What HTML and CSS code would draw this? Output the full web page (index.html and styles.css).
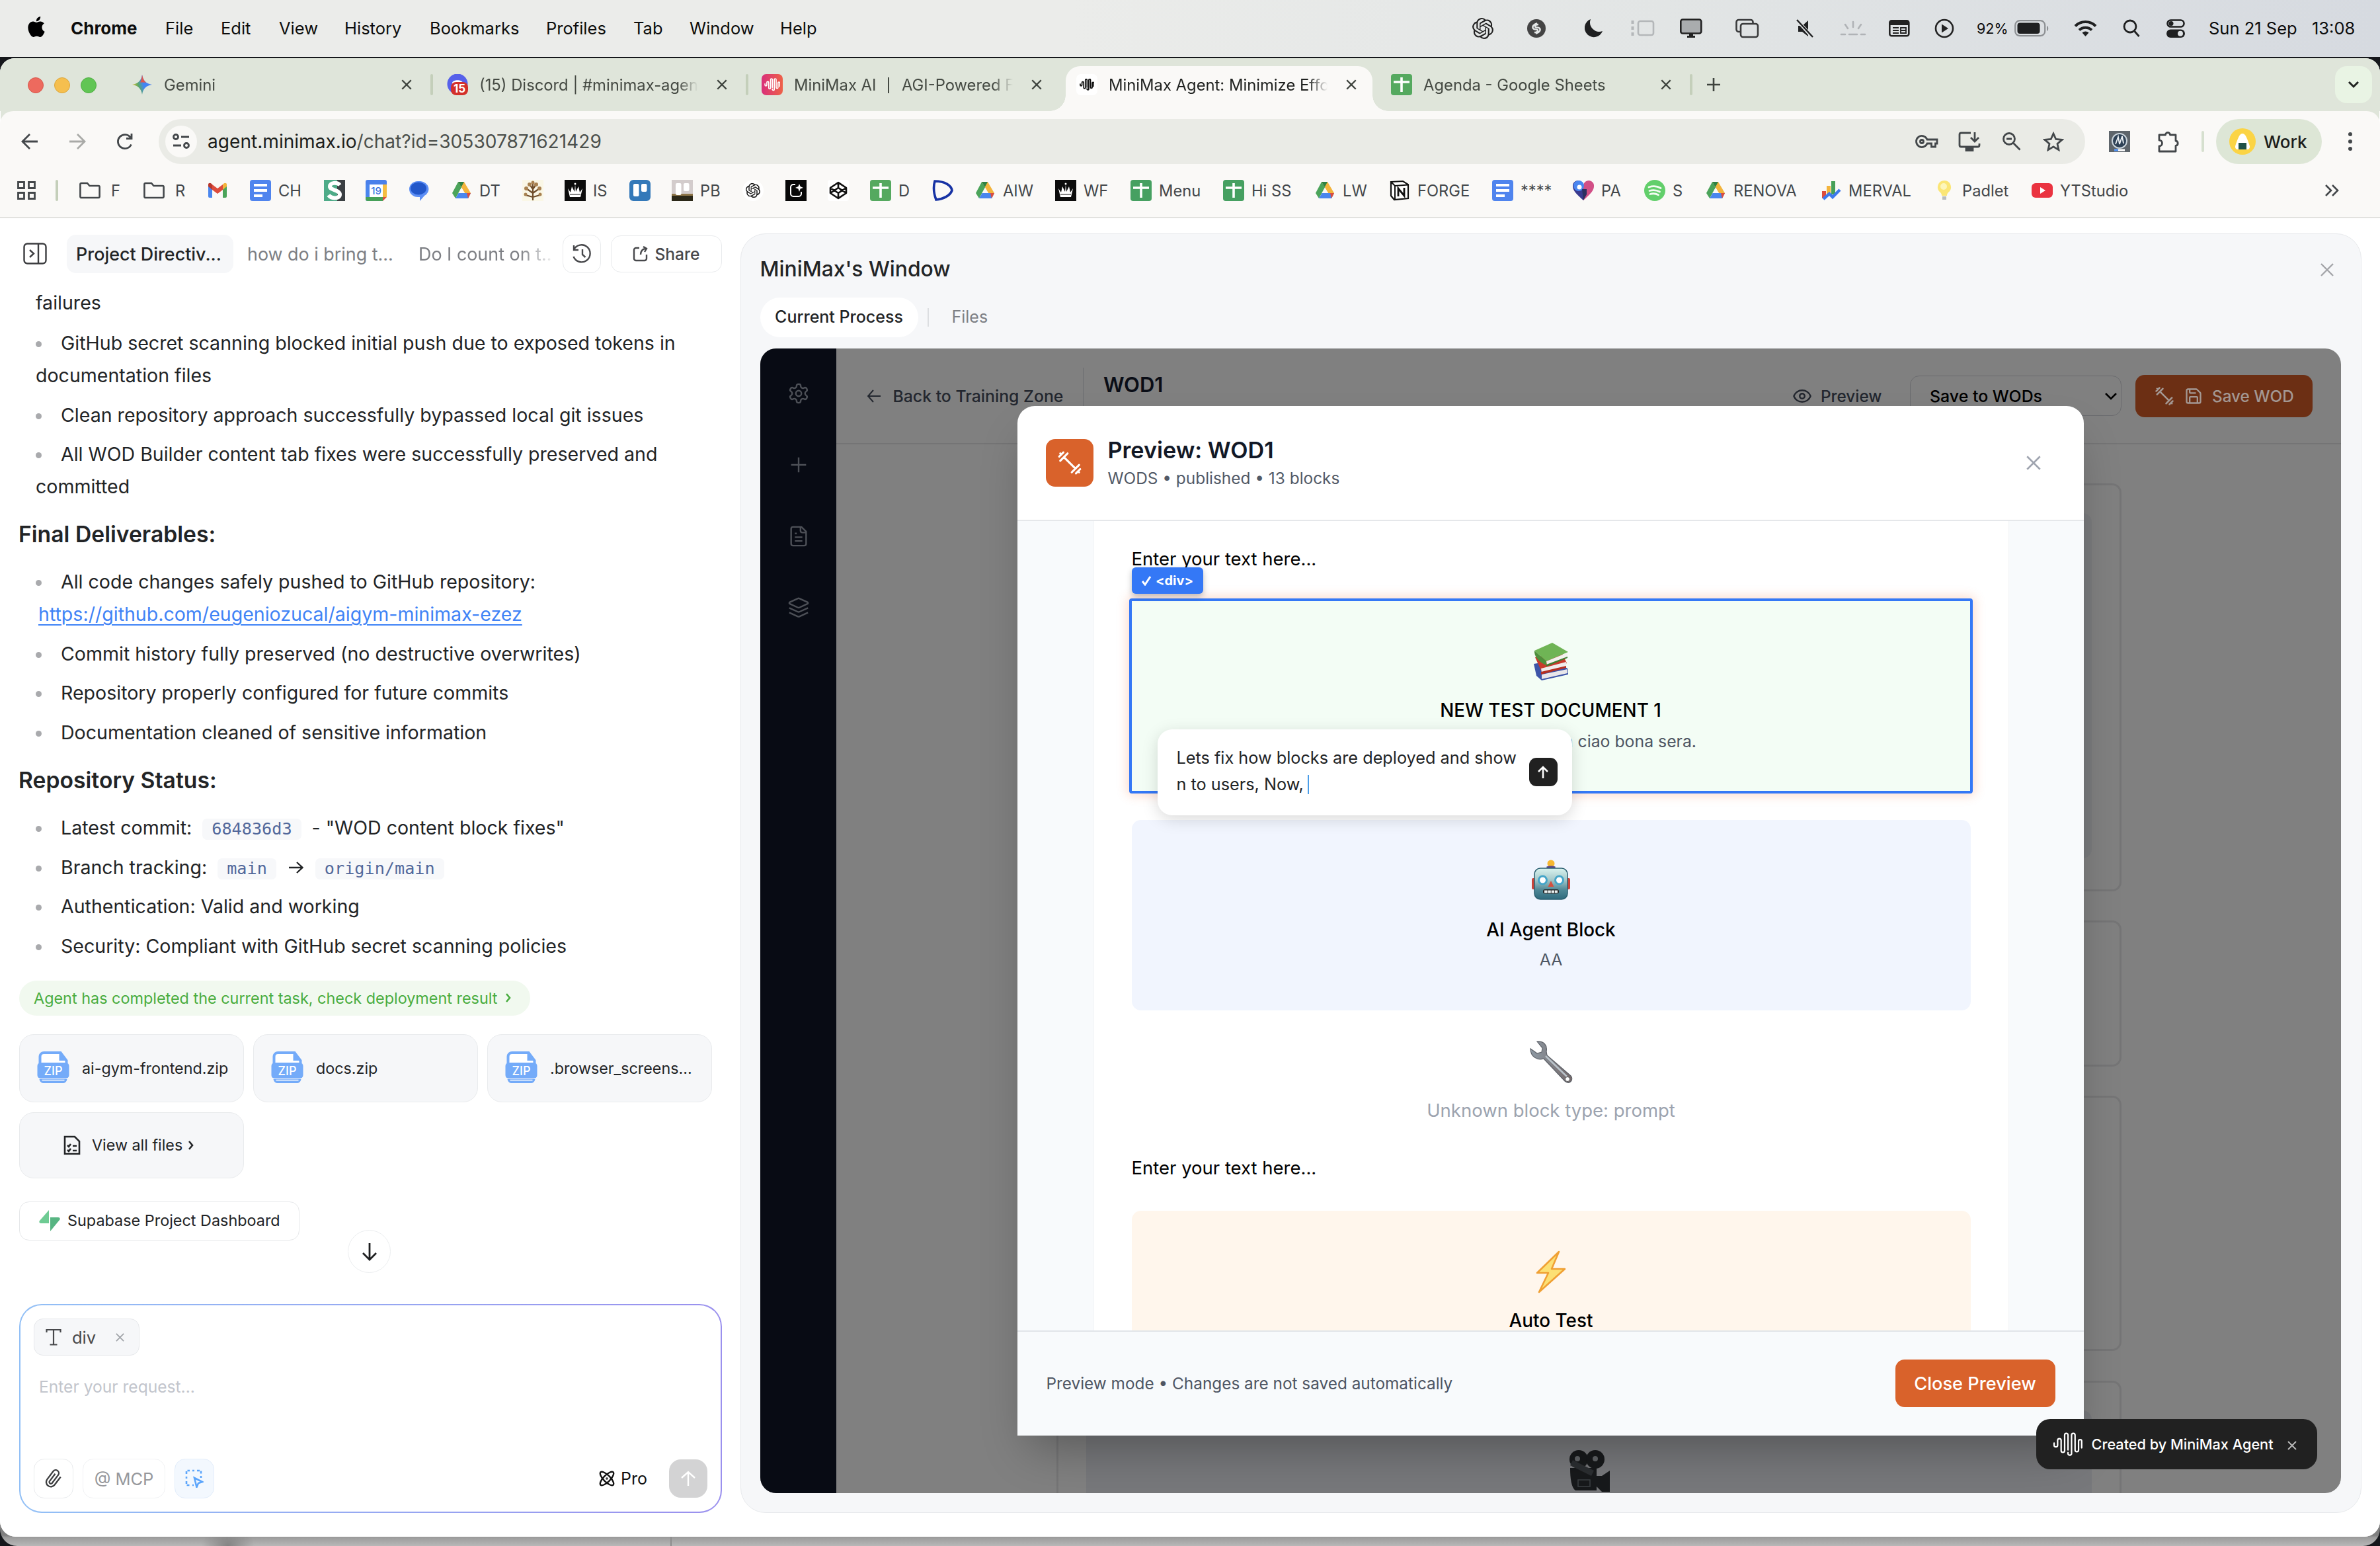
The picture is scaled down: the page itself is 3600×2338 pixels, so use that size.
FILE: index.html
```html
<!DOCTYPE html>
<html lang="en">
<head>
<meta charset="utf-8">
<title>MiniMax Agent: Minimize Effort</title>
<link rel="stylesheet" href="styles.css">
</head>
<body>
<svg class="defs" aria-hidden="true">
  <symbol id="x" viewBox="0 0 24 24"><path d="M3 3l18 18M21 3L3 21"/></symbol>
  <symbol id="openai" viewBox="0 0 24 24"><path d="M22.2819 9.8211a5.9847 5.9847 0 0 0-.5157-4.9108 6.0462 6.0462 0 0 0-6.5098-2.9A6.0651 6.0651 0 0 0 4.9807 4.1818a5.9847 5.9847 0 0 0-3.9977 2.9 6.0462 6.0462 0 0 0 .7427 7.0966 5.98 5.98 0 0 0 .511 4.9107 6.051 6.051 0 0 0 6.5146 2.9001A5.9847 5.9847 0 0 0 13.2599 24a6.0557 6.0557 0 0 0 5.7718-4.2058 5.9894 5.9894 0 0 0 3.9977-2.9001 6.0557 6.0557 0 0 0-.7475-7.0729zm-9.022 12.6081a4.4755 4.4755 0 0 1-2.8764-1.0408l.1419-.0804 4.7783-2.7582a.7948.7948 0 0 0 .3927-.6813v-6.7369l2.02 1.1686a.071.071 0 0 1 .038.0615v5.5826a4.504 4.504 0 0 1-4.4945 4.4944zm-9.6607-4.1254a4.4708 4.4708 0 0 1-.5346-3.0137l.142.0852 4.783 2.7582a.7712.7712 0 0 0 .7806 0l5.8428-3.3685v2.3324a.0804.0804 0 0 1-.0332.0615L9.74 19.9502a4.4992 4.4992 0 0 1-6.1408-1.6464zM2.3408 7.8956a4.485 4.485 0 0 1 2.3655-1.9728V11.6a.7664.7664 0 0 0 .3879.6765l5.8144 3.3543-2.0201 1.1685a.0757.0757 0 0 1-.071 0l-4.8303-2.7865A4.504 4.504 0 0 1 2.3408 7.872zm16.5963 3.8558L13.1038 8.364 15.1192 7.2a.0757.0757 0 0 1 .071 0l4.8303 2.7913a4.4944 4.4944 0 0 1-.6765 8.1042v-5.6772a.79.79 0 0 0-.407-.667zm2.0107-3.0231l-.142-.0852-4.7735-2.7818a.7759.7759 0 0 0-.7854 0L9.409 9.2297V6.8974a.0662.0662 0 0 1 .0284-.0615l4.8303-2.7866a4.4992 4.4992 0 0 1 6.6802 4.66zM8.3065 12.863l-2.02-1.1638a.0804.0804 0 0 1-.038-.0567V6.0742a4.4992 4.4992 0 0 1 7.3757-3.4537l-.142.0805L8.704 5.459a.7948.7948 0 0 0-.3927.6813zm1.0976-2.3654l2.602-1.4998 2.6069 1.4998v2.9994l-2.5974 1.4997-2.6067-1.4997Z"/></symbol>
  <symbol id="folder" viewBox="0 0 32 32"><path d="M3 5h9l3.500 4H29a1.600 1.600 0 0 1 1.600 1.600v15A1.600 1.600 0 0 1 29 27H3a1.600 1.600 0 0 1-1.600-1.600V6.600A1.600 1.600 0 0 1 3 5z" fill="none" stroke="#43474a" stroke-width="2.600"/></symbol>
  <symbol id="sheets" viewBox="0 0 32 32"><rect width="32" height="32" rx="4" fill="#55a95f"/><path d="M4 12h24M16 5v22" fill="none" stroke="#fff" stroke-width="3.600"/></symbol>
  <symbol id="sheets-dark" viewBox="0 0 32 32"><rect width="32" height="32" rx="4" fill="#46a061"/><path d="M4 12h24M16 5v22" fill="none" stroke="#fff" stroke-width="3.600"/></symbol>
  <symbol id="docs" viewBox="0 0 32 32"><rect width="32" height="32" rx="4" fill="#4f84ee"/><path d="M6 8h20M6 16h20M6 24h13" fill="none" stroke="#fff" stroke-width="4"/></symbol>
  <symbol id="drive" viewBox="0 0 32 32"><path d="M11 3h9l10 17-4 8z" fill="#f3b43c"/><path d="M11 3l5 8.500L7 28 2 20z" fill="#4ba45a"/><path d="M7 28l4.500-8H30l-4 8z" fill="#4a86ee"/><path d="M24 20h6l-4 8z" fill="#dd4c3c"/><path d="M11 3h9l-4.300 8z" fill="#2f8142"/><path d="M16 12l4.600 8h-9.200z" fill="#faf9f7"/></symbol>
  <symbol id="crown" viewBox="0 0 32 32"><rect width="32" height="32" fill="#0c0c0c"/><path d="M5 13l4 6 2-9 4 8 1-11 1 11 4-8 2 9 4-6-3 13H8z" fill="#fff"/><path d="M8 22h16M16 3v5M13.500 5h5" stroke="#0c0c0c" stroke-width="1"/><circle cx="16" cy="6" r="1.500" fill="#fff"/></symbol>
  <symbol id="wave" viewBox="0 0 44 36"><path d="M2 16v3a2.600 2.600 0 0 0 5.200 0v-7a2.600 2.600 0 0 1 5.200 0v15a2.600 2.600 0 0 0 5.200 0V4a2.500 2.500 0 0 1 5 0v22M22.600 30a2.600 2.600 0 0 0 5.200 2V4a2.600 2.600 0 0 1 5.200 0v22a2.600 2.600 0 0 0 5.200 0V13a2.300 2.300 0 0 1 4.600 0v10" fill="none" stroke-linecap="round"/></symbol>
  <symbol id="dumbbell" viewBox="0 0 24 24"><path d="M6.500 6.500l11 11M21 21l-1-1M3 3l1 1M18 22l4-4M2 6l4-4M3 10l7-7M14 21l7-7" fill="none" stroke-linecap="round"/></symbol>
  <symbol id="zip" viewBox="0 0 48 50"><path d="M4 18V8a6 6 0 0 1 6-6h25l9 12v4" fill="#fff" stroke="#74abf9" stroke-width="4"/><path d="M33 3v11h12z" fill="#74abf9"/><rect x="0" y="17" width="48" height="24" rx="5" fill="#74abf9"/><path d="M3 42c1 4 3 6 7 6h28c4 0 6-2 7-6z" fill="#74abf9"/><path d="M7 43.500h34" stroke="#fff" stroke-width="1.600"/><text x="24" y="36" text-anchor="middle" font-family="Inter" font-size="18" font-weight="500" fill="#fff">ZIP</text></symbol>
</svg>

<header class="menubar">
  <svg class="apple" viewBox="0 0 24 24"><path d="M12.152 6.896c-.948 0-2.415-1.078-3.960-1.040-2.040.027-3.910 1.183-4.961 3.014-2.117 3.675-.546 9.103 1.519 12.090 1.013 1.454 2.208 3.090 3.792 3.039 1.520-.065 2.090-.987 3.935-.987 1.831 0 2.350.987 3.960.948 1.637-.026 2.676-1.480 3.676-2.948 1.156-1.688 1.636-3.325 1.662-3.415-.039-.013-3.182-1.221-3.220-4.857-.026-3.040 2.480-4.494 2.597-4.559-1.429-2.090-3.623-2.324-4.390-2.376-2-.156-3.675 1.090-4.610 1.090zM15.530 3.830c.843-1.012 1.400-2.427 1.245-3.830-1.207.052-2.662.805-3.532 1.818-.780.896-1.454 2.338-1.273 3.714 1.338.104 2.715-.688 3.559-1.701"/></svg>
  <b>Chrome</b><span>File</span><span>Edit</span><span>View</span><span>History</span><span>Bookmarks</span><span>Profiles</span><span>Tab</span><span>Window</span><span>Help</span>
  <svg width="32" height="32"><use href="#openai"/></svg>
  <svg width="28" height="28" viewBox="0 0 28 28"><circle cx="14" cy="14" r="14" fill="#444"/><path d="M15 6c-5 2-8 5-6 8s7 0 7 3-3 3-5 3M13 22c5-2 8-5 6-8s-7 0-7-3 3-3 5-3" fill="none" stroke="#e5e8e8" stroke-width="2.400"/></svg>
  <svg width="28" height="28" viewBox="0 0 28 28"><path d="M9 0a14 14 0 1 0 18 18A14 14 0 0 1 9 0z" fill="#1f2021"/></svg>
  <svg width="36" height="28" viewBox="0 0 36 28" fill="none" stroke="#b4b7b9" stroke-width="2.600"><rect x="11" y="3" width="23" height="21" rx="3"/><path d="M2.500 2v5M2.500 11v5M2.500 20v5" stroke-width="4"/></svg>
  <svg width="34" height="30" viewBox="0 0 34 30"><rect x="1.300" y="1.500" width="31" height="21" rx="3" fill="#a9acae" stroke="#222" stroke-width="2.600"/><path d="M14 22h6v4h3v3H11v-3h3z" fill="#222"/></svg>
  <svg width="36" height="30" viewBox="0 0 36 30" fill="none" stroke="#3a3b3c" stroke-width="2.600"><path d="M7 20H5a3.500 3.500 0 0 1-3.500-3.500v-11A3.500 3.500 0 0 1 5 2h18a3.500 3.500 0 0 1 3.500 3.500V7"/><rect x="8" y="8" width="26" height="20" rx="3.500" fill="#dfe2e3"/></svg>
  <svg width="28" height="30" viewBox="0 0 28 30"><path d="M4 11h6l9-8v24l-9-7H4z" fill="#1f2021"/><path d="M1 1l25 28" stroke="#e0e3e4" stroke-width="5"/><path d="M2 2l24 26" stroke="#1f2021" stroke-width="2.400"/></svg>
  <svg width="40" height="26" viewBox="0 0 40 26" stroke="#b0b3b6" stroke-width="2.600" stroke-linecap="round"><path d="M20 3v8M8 7l4 6M32 7l-4 6M2 22h6M14 22h12M32 22h6"/></svg>
  <svg width="32" height="26" viewBox="0 0 32 26"><rect x="1.300" y="1.300" width="29" height="23" rx="3" fill="none" stroke="#222" stroke-width="2.600"/><path d="M2 2h28v6H2z" fill="#222"/><path d="M6 12h9M6 16h9M6 20h9M18 12h8v8h-8zM18 16h8" fill="none" stroke="#222" stroke-width="1.800"/></svg>
  <svg width="30" height="30" viewBox="0 0 30 30"><circle cx="15" cy="15" r="13" fill="none" stroke="#222" stroke-width="2.600"/><path d="M11 8.500l10 6.500-10 6.500z" fill="#222"/></svg>
  <span class="pct">92%</span>
  <svg width="52" height="26" viewBox="0 0 52 26"><rect x="1.200" y="1.200" width="45" height="23" rx="7" fill="none" stroke="#8d9093" stroke-width="2.200"/><rect x="4.500" y="4.500" width="34" height="16.500" rx="4" fill="#1f2021"/><path d="M49 9c3 1 3 7 0 8z" fill="#8d9093"/></svg>
  <svg width="35" height="26" viewBox="0 0 35 26" fill="none" stroke="#1f2021" stroke-width="4"><path d="M2 9.500a22 22 0 0 1 31 0M8 15.500a14 14 0 0 1 19 0"/><path d="M17.500 25l-5-5.500a7.500 7.500 0 0 1 10 0z" fill="#1f2021" stroke="none"/></svg>
  <svg width="26" height="28" viewBox="0 0 26 28" fill="none" stroke="#1f2021" stroke-width="2.800"><circle cx="11" cy="11" r="9"/><path d="M17.500 18l7 8"/></svg>
  <svg width="28" height="28" viewBox="0 0 28 28"><rect x="1.500" y="1.500" width="25" height="10" rx="5" fill="none" stroke="#1f2021" stroke-width="2.600"/><circle cx="7" cy="6.500" r="3.500" fill="#1f2021"/><rect y="15.500" width="28" height="12.500" rx="6.200" fill="#1f2021"/><circle cx="21" cy="21.700" r="4" fill="#dde0e3"/></svg>
  <span>Sun 21 Sep</span><span>13:08</span>
</header>

<main class="window">
  <div class="tabstrip">
    <div class="lights"><i></i><i></i><i></i></div>
    <div class="tab"><svg viewBox="0 0 32 32"><defs><linearGradient id="gm" x1="0" y1=".6" x2="1" y2=".3"><stop offset="0" stop-color="#f2c230"/><stop offset=".3" stop-color="#5aa867"/><stop offset=".55" stop-color="#4285f4"/><stop offset="1" stop-color="#4a7ff0"/></linearGradient></defs><path d="M16 1c1.500 9 6 13.500 15 15-9 1.500-13.500 6-15 15-1.500-9-6-13.500-15-15 9-1.500 13.500-6 15-15z" fill="url(#gm)"/><path d="M16 1c.9 5.500 2.800 9.300 6 11.700l-9-.2c1.500-2.500 2.400-6 3-11.500z" fill="#e2574c"/></svg><span class="t">Gemini</span><svg class="tx"><use href="#x"/></svg><i class="sep"></i></div>
    <div class="tab"><svg viewBox="0 0 32 32"><circle cx="16" cy="15" r="15.500" fill="#5661ea"/><path d="M8 13c2-5 14-5 16 0v5H8z" fill="#fff"/><rect x="6" y="12" width="26" height="20" rx="8" fill="#d3302b"/><text x="19" y="28" text-anchor="middle" font-family="Inter" font-size="17" font-weight="700" fill="#fff">15</text></svg><span class="t">(15) Discord | #minimax-agent</span><svg class="tx"><use href="#x"/></svg><i class="sep"></i></div>
    <div class="tab"><svg viewBox="0 0 32 32"><defs><linearGradient id="mm"><stop offset="0" stop-color="#d92f7a"/><stop offset="1" stop-color="#ee6248"/></linearGradient></defs><rect width="32" height="32" rx="7" fill="url(#mm)"/><use href="#wave" x="4" y="6" width="24" height="20" stroke="#fff" stroke-width="3"/></svg><span class="t">MiniMax AI<em></em>AGI-Powered Fo</span><svg class="tx"><use href="#x"/></svg></div>
    <div class="tab active"><svg viewBox="0 0 32 32"><rect width="32" height="32" rx="7" fill="#fff"/><use href="#wave" x="5" y="7" width="22" height="18" stroke="#111" stroke-width="3.500"/></svg><span class="t">MiniMax Agent: Minimize Effort</span><svg class="tx"><use href="#x"/></svg></div>
    <div class="tab last"><svg><use href="#sheets"/></svg><span class="t">Agenda - Google Sheets</span><svg class="tx"><use href="#x"/></svg><i class="sep"></i></div>
    <svg class="newtab" viewBox="0 0 22 22"><path d="M11 1v20M1 11h20"/></svg>
    <div class="tabmenu"><svg width="18" height="12" viewBox="0 0 18 12"><path d="M2 2l7 7 7-7"/></svg></div>
  </div>

  <div class="toolbar">
    <svg width="26" height="26" viewBox="0 0 26 26"><path d="M25 13H2M13 2L2 13l11 11"/></svg>
    <svg class="dim" width="26" height="26" viewBox="0 0 26 26"><path d="M1 13h23M13 2l11 11-11 11"/></svg>
    <svg width="26" height="26" viewBox="0 0 26 26"><path d="M22.500 17.500a10.500 10.500 0 1 1-1-10.500M23 1v7.500h-8"/></svg>
    <div class="omnibox">
      <div class="site"><svg width="26" height="24" viewBox="0 0 26 24"><circle cx="5" cy="5" r="3.500"/><path d="M13 5h12M1 18h12"/><circle cx="21" cy="18" r="3.500"/></svg></div>
      <span class="url">agent.minimax.io<span>/chat?id=305307871621429</span></span>
      <svg width="36" height="24" viewBox="0 0 36 24"><path d="M19 9h15v6h-2.500v5h-6v-5H19a8.500 8.500 0 1 1 0-6z"/><circle cx="11" cy="12" r="2.500"/></svg>
      <svg width="34" height="30" viewBox="0 0 34 30"><path d="M19 2H4.500A2.500 2.500 0 0 0 2 4.500v16A2.500 2.500 0 0 0 4.500 23h25a2.500 2.500 0 0 0 2.500-2.500V18M25 1v13M19 9l6 6 6-6"/><path d="M12 24h10v5H12z" fill="#43474a"/></svg>
      <svg width="30" height="30" viewBox="0 0 30 30"><circle cx="11" cy="11" r="8.500"/><path d="M17.500 17.500l10 10M7 11h8"/></svg>
      <svg width="32" height="30" viewBox="0 0 32 30"><path d="M16 3l3.800 8.500 9.200.9-7 6.100 2 9.100-8-4.800-8 4.800 2-9.100-7-6.100 9.200-.9z"/></svg>
    </div>
    <svg class="ext" width="32" height="32" viewBox="0 0 32 32"><rect width="32" height="32" fill="#5e656b"/><circle cx="16" cy="15" r="11" fill="#2f4256" stroke="#c9d3da" stroke-width="2"/><path d="M10 20l4-11 2 11 4-12 2 11" stroke="#e9eef2" stroke-width="1.800"/><path d="M8 29h16" stroke="#fff" stroke-width="3"/><path d="M8 29h6" stroke="#4a8df0" stroke-width="3"/></svg>
    <svg width="34" height="34" viewBox="0 0 34 34"><path d="M3 7h9.500a3.500 3.500 0 0 1 7 0H28v9a3.800 3.800 0 0 1 0 7.500V32H3v-8a4.500 4.500 0 0 0 0-9z" stroke-linejoin="round"/></svg>
    <i class="sep"></i>
    <div class="profile"><svg width="40" height="40" viewBox="0 0 40 40"><circle cx="20" cy="20" r="20" fill="#fbd445" stroke="none"/><path d="M20 8c3 0 5 3 7 8s4 10 4 12-1 4-4 4H13c-3 0-4-2-4-4s2-7 4-12 4-8 7-8z" fill="#fff" stroke="none"/><rect x="14" y="22" width="12" height="10" fill="#1f5147" stroke="none"/></svg>Work</div>
    <svg class="dots" width="8" height="30" viewBox="0 0 8 30"><circle cx="4" cy="4" r="3"/><circle cx="4" cy="15" r="3"/><circle cx="4" cy="26" r="3"/></svg>
  </div>

  <nav class="bookmarks">
    <a><svg viewBox="0 0 32 32" fill="none" stroke="#43474a" stroke-width="2.800"><path d="M3.500 3.500h9v9h-9zM19.500 3.500h9v9h-9zM3.500 19.500h9v9h-9zM19.500 19.500h9v9h-9z"/></svg></a>
    <a><i class="sep"></i></a>
    <a class="dir"><svg><use href="#folder"/></svg>F</a>
    <a class="dir"><svg><use href="#folder"/></svg>R</a>
    <a><svg viewBox="0 0 32 32"><path d="M2 7v18a2 2 0 0 0 2 2h4V14z" fill="#4a86ee"/><path d="M30 7v18a2 2 0 0 1-2 2h-4V14z" fill="#4ba45a"/><path d="M2 7c0-2.500 3-3 4.500-1.500L8 7v8L2 10z" fill="#b8372c"/><path d="M8 7l8 6 8-6v8l-8 6-8-6z" fill="#dd4c3c"/><path d="M30 7c0-2.500-3-3-4.500-1.500L24 7v8l6-5z" fill="#f3b43c"/></svg></a>
    <a><svg><use href="#docs"/></svg>CH</a>
    <a><svg viewBox="0 0 32 32"><rect width="20" height="32" fill="#4eab88"/><rect x="20" width="12" height="32" fill="#3a3f42"/><path d="M24 8c-4-5-15-4-15 2s15 5 15 12-13 7-17 1" fill="none" stroke="#fff" stroke-width="6"/></svg></a>
    <a><svg viewBox="0 0 32 32"><path d="M0 3a3 3 0 0 1 3-3h26a3 3 0 0 1 3 3v5H0z" fill="#4a80ea"/><path d="M0 7h7v25H3a3 3 0 0 1-3-3z" fill="#4a86ee"/><path d="M26 7h6v19h-6z" fill="#f5bd41"/><path d="M0 26h26v6H3a3 3 0 0 1-3-3z" fill="#46a058"/><path d="M26 26h6l-6 6z" fill="#dd4c3c"/><rect x="6" y="7" width="20" height="19" fill="#fff"/><text x="16" y="22" text-anchor="middle" font-family="Inter" font-size="15" font-weight="500" fill="#3b74e0">19</text></svg></a>
    <a><svg viewBox="0 0 32 32"><path d="M14 2h4a14 12 0 0 1 6 22l-7 8v-6h-3a13 12 0 0 1 0-24z" fill="#5d8ff5"/><ellipse cx="15" cy="13" rx="12" ry="9.500" fill="#2257c9"/></svg></a>
    <a><svg><use href="#drive"/></svg>DT</a>
    <a><svg viewBox="0 0 32 32"><rect width="32" height="32" fill="#faf7e6"/><path d="M16 31V6M16 20L6 13M16 20l10-7M16 26L5 23M16 26l11-3M16 14l-5-7M16 14l5-7" stroke="#6f4d2a" stroke-width="2.200" fill="none"/><g fill="#a8814f"><circle cx="6" cy="13" r="3"/><circle cx="26" cy="13" r="3"/><circle cx="11" cy="7" r="3"/><circle cx="21" cy="7" r="3"/><circle cx="16" cy="4" r="2.500"/><circle cx="5" cy="22" r="2.500"/><circle cx="27" cy="22" r="2.500"/></g></svg></a>
    <a><svg><use href="#crown"/></svg>IS</a>
    <a><svg viewBox="0 0 32 32"><rect width="32" height="32" rx="6" fill="#3479b9"/><rect x="6" y="6" width="8.500" height="19" rx="2" fill="#fff"/><rect x="18" y="6" width="8.500" height="12" rx="2" fill="#fff"/></svg></a>
    <a><svg viewBox="0 0 32 32"><rect width="32" height="32" fill="#d3cccc"/><path d="M0 22h32v10H0z" fill="#2b2818"/><path d="M0 21h32v3H0z" fill="#8d7548"/><rect x="6" y="5" width="8.500" height="18" rx="2" fill="#fff"/><rect x="18" y="5" width="8.500" height="12" rx="2" fill="#fff"/></svg>PB</a>
    <a><svg viewBox="0 0 32 32"><circle cx="16" cy="16" r="16" fill="#fff"/><use href="#openai" x="5" y="5" width="22" height="22"/></svg></a>
    <a><svg viewBox="0 0 32 32"><rect width="32" height="32" fill="#080808"/><path d="M15 7h-3a4 4 0 0 0-4 4v10a4 4 0 0 0 4 4h8a4 4 0 0 0 4-4v-3" fill="none" stroke="#fff" stroke-width="2"/><path d="M21 6l1.600 4L27 12l-4.400 1.600L21 18l-1.600-4.400L15 12l4.400-2z" fill="#fff"/></svg></a>
    <a><svg viewBox="0 0 32 32"><rect width="32" height="32" rx="4" fill="#fff"/><path d="M16 4l12 8v8l-12 8-12-8v-8zM16 4v8M16 20v8M4 12l12 8 12-8M4 20l12-8 12 8" fill="none" stroke="#111" stroke-width="2.600" stroke-linejoin="round"/></svg></a>
    <a><svg><use href="#sheets"/></svg>D</a>
    <a><svg viewBox="0 0 32 32"><path d="M4 2c16 0 25 7 26 14-3 8-13 13-24 14C3 22 1 12 4 2z" fill="none" stroke="#1733a4" stroke-width="3.600"/></svg></a>
    <a><svg><use href="#drive"/></svg>AIW</a>
    <a><svg><use href="#crown"/></svg>WF</a>
    <a><svg><use href="#sheets-dark"/></svg>Menu</a>
    <a><svg><use href="#sheets-dark"/></svg>Hi SS</a>
    <a><svg><use href="#drive"/></svg>LW</a>
    <a><svg viewBox="0 0 32 32"><path d="M3 3l18-1 8 5v21L8 30l-5-6z" fill="#fff" stroke="#111" stroke-width="2.200"/><path d="M4 4l5 5 20-1.500M9 9v20" fill="none" stroke="#111" stroke-width="2"/><path d="M14 25V13l9 11V12" fill="none" stroke="#111" stroke-width="2.800"/></svg>FORGE</a>
    <a><svg><use href="#docs"/></svg>****</a>
    <a><svg viewBox="0 0 32 32"><path d="M16 31C6 22 0 16 0 10A8 8 0 0 1 16 8z" fill="#3a3b8f"/><path d="M16 31c10-9 16-15 16-21A8 8 0 0 0 16 8z" fill="#d24f86"/><circle cx="9" cy="9" r="8" fill="#4a86f0"/><circle cx="10" cy="11" r="3.500" fill="#fff"/><path d="M14 14h7v8l-5 9z" fill="#2c3060"/></svg>PA</a>
    <a><svg viewBox="0 0 32 32"><circle cx="16" cy="16" r="16" fill="#62cf6b"/><path d="M7 11c6-2 13-1.500 18 1.500M8 16.500c5-1.500 11-1 15.500 1.500M9 21.500c4-1.200 8.500-1 12.500 1.300" fill="none" stroke="#f4fbf2" stroke-width="2.800" stroke-linecap="round"/></svg>S</a>
    <a><svg><use href="#drive"/></svg>RENOVA</a>
    <a><svg viewBox="0 0 32 32"><rect x="3" y="17" width="6" height="11" fill="#dd4c3c"/><rect x="10" y="9" width="6" height="14" fill="#f3b43c"/><rect x="17" y="2" width="6" height="20" fill="#46a058"/><path d="M5 29l9-8 5 5 11-11" fill="none" stroke="#3d79ec" stroke-width="4.500"/></svg>MERVAL</a>
    <a><svg viewBox="0 0 32 32"><path d="M16 1a10 10 0 0 0-6 18c1.500 1.500 2 3 2 5h8c0-2 .5-3.500 2-5A10 10 0 0 0 16 1z" fill="#fbe676"/><circle cx="15" cy="10" r="5" fill="#fdf6bb"/><path d="M13 25h6v5h-6z" fill="#b9bdbf"/></svg>Padlet</a>
    <a><svg viewBox="0 0 32 32"><rect y="5" width="32" height="22" rx="6" fill="#ea3340"/><path d="M13 11l8 5-8 5z" fill="#fff"/></svg>YTStudio</a>
    <a><svg viewBox="0 0 32 32" fill="none" stroke="#43474a" stroke-width="2.600"><path d="M7 8l8 8-8 8M17 8l8 8-8 8"/></svg></a>
  </nav>

  <div class="page">
    <section class="chat">
      <div class="chat-tabs">
        <svg class="side" width="36" height="34" viewBox="0 0 36 34"><rect x="1.500" y="1.500" width="33" height="30" rx="5"/><path d="M23 2v29M10 11l6 5.500-6 5.500"/></svg>
        <span class="ct on">Project Directiv...</span>
        <span class="ct">how do i bring t...</span>
        <span class="ct fade">Do I count on t...</span>
        <span class="hist"><svg width="30" height="30" viewBox="0 0 30 30"><path d="M3 8.500A13 13 0 1 1 2.500 19M3 2v7h7M16 8v8l4.500 4"/></svg></span>
        <span class="share"><svg width="24" height="24" viewBox="0 0 24 24"><path d="M10 3H5a3 3 0 0 0-3 3v13a3 3 0 0 0 3 3h13a3 3 0 0 0 3-3v-6M12 13c0-5 3-9 8-9M16 1l5 3-3 5"/></svg>Share</span>
      </div>
      <div class="msg">
        <p class="cont">failures</p>
        <ul>
          <li>GitHub secret scanning blocked initial push due to exposed tokens in<br>documentation files</li>
          <li>Clean repository approach successfully bypassed local git issues</li>
          <li>All WOD Builder content tab fixes were successfully preserved and<br>committed</li>
        </ul>
        <h3>Final Deliverables:</h3>
        <ul>
          <li>All code changes safely pushed to GitHub repository:<br><a class="link">https://github.com/eugeniozucal/aigym-minimax-ezez</a></li>
          <li>Commit history fully preserved (no destructive overwrites)</li>
          <li>Repository properly configured for future commits</li>
          <li>Documentation cleaned of sensitive information</li>
        </ul>
        <h3>Repository Status:</h3>
        <ul>
          <li>Latest commit: <code>684836d3</code> - "WOD content block fixes"</li>
          <li>Branch tracking: <code>main</code><svg class="arr" width="24" height="20" viewBox="0 0 24 20"><path d="M1 10h20M13 2l8.500 8-8.500 8"/></svg><code>origin/main</code></li>
          <li>Authentication: Valid and working</li>
          <li>Security: Compliant with GitHub secret scanning policies</li>
        </ul>
        <div class="done">Agent has completed the current task, check deployment result<svg width="10" height="16" viewBox="0 0 10 16"><path d="M2 2l5 6-5 6"/></svg></div>
        <div class="files">
          <div class="file"><svg width="49" height="50"><use href="#zip"/></svg>ai-gym-frontend.zip</div>
          <div class="file"><svg width="49" height="50"><use href="#zip"/></svg>docs.zip</div>
          <div class="file"><svg width="49" height="50"><use href="#zip"/></svg>.browser_screens...</div>
          <div class="file all"><svg width="26" height="30" viewBox="0 0 26 30"><path d="M2 2h15l7 7v19H2zM6 15l2 2 3-4M6 22l2 2 3-4M14 16h6M14 23h6"/></svg>View all files<svg width="10" height="16" viewBox="0 0 10 16"><path d="M2 2l5 6-5 6"/></svg></div>
        </div>
        <div class="supa"><svg width="32" height="34" viewBox="0 0 32 34"><path d="M15 1v20H3c-2.500 0-3.500-2-2-4z" fill="#6ecb93"/><path d="M17 33V12h12c2.500 0 3.500 2 2 4z" fill="#57b582"/></svg>Supabase Project Dashboard</div>
        <div class="down"><svg width="24" height="30" viewBox="0 0 24 30"><path d="M12 2v25M2 17l10 10 10-10"/></svg></div>
      </div>
      <div class="composer">
        <div class="chip"><svg width="24" height="26" viewBox="0 0 24 26"><path d="M1.500 6V2h21v4M12 2v22M6.500 24.500h11"/></svg>div<svg class="cx" width="15" height="15"><use href="#x"/></svg></div>
        <div class="ph">Enter your request...</div>
        <div class="actions">
          <span class="sq"><svg width="28" height="28" viewBox="0 0 24 24"><path d="M21.400 11.100l-9.200 9.200a6 6 0 0 1-8.500-8.500l9.200-9.200a4 4 0 0 1 5.700 5.700l-9.200 9.200a2 2 0 0 1-2.900-2.900l8.500-8.400" transform="rotate(-8 12 12)"/></svg></span>
          <span class="sq mcp">@ MCP</span>
          <span class="sq sel"><svg width="28" height="28" viewBox="0 0 28 28"><path d="M2 7V2h5M11 2h3M18 2h6v5M24 10v3M2 11v3M2 18v6h5M11 24h2"/><path d="M14 13l12 6-6 2-2.500 6z"/></svg></span>
          <span class="pro"><svg width="24" height="24" viewBox="0 0 24 24"><ellipse cx="12" cy="12" rx="13.500" ry="5" transform="rotate(45 12 12)"/><ellipse cx="12" cy="12" rx="13.500" ry="5" transform="rotate(-45 12 12)"/><circle cx="12" cy="12" r=".6"/></svg>Pro</span>
          <span class="send"><svg width="24" height="24" viewBox="0 0 24 24"><path d="M12 23V2M2 11l10-9 10 9"/></svg></span>
        </div>
      </div>
    </section>

    <section class="panel">
      <div class="panel-head"><h2>MiniMax's Window</h2><svg width="24" height="24"><use href="#x"/></svg></div>
      <div class="panel-tabs"><span class="pill">Current Process</span><i></i><span class="off">Files</span></div>
      <div class="view">
        <aside class="rail">
          <svg viewBox="0 0 24 24"><path d="M12.220 2h-.440a2 2 0 0 0-2 2v.180a2 2 0 0 1-1 1.730l-.430.250a2 2 0 0 1-2 0l-.150-.080a2 2 0 0 0-2.730.730l-.220.380a2 2 0 0 0 .730 2.730l.150.100a2 2 0 0 1 1 1.720v.510a2 2 0 0 1-1 1.740l-.150.090a2 2 0 0 0-.730 2.730l.220.380a2 2 0 0 0 2.730.730l.150-.080a2 2 0 0 1 2 0l.430.250a2 2 0 0 1 1 1.730V20a2 2 0 0 0 2 2h.440a2 2 0 0 0 2-2v-.180a2 2 0 0 1 1-1.730l.430-.250a2 2 0 0 1 2 0l.150.080a2 2 0 0 0 2.730-.730l.220-.390a2 2 0 0 0-.730-2.730l-.150-.080a2 2 0 0 1-1-1.740v-.500a2 2 0 0 1 1-1.740l.150-.090a2 2 0 0 0 .730-2.730l-.220-.380a2 2 0 0 0-2.730-.730l-.150.080a2 2 0 0 1-2 0l-.430-.250a2 2 0 0 1-1-1.730V4a2 2 0 0 0-2-2z"/><circle cx="12" cy="12" r="3"/></svg>
          <svg viewBox="0 0 24 24"><path d="M4 12h16M12 4v16"/></svg>
          <svg viewBox="0 0 24 24"><path d="M15 2H6a2 2 0 0 0-2 2v16a2 2 0 0 0 2 2h12a2 2 0 0 0 2-2V7zM14 2v4a2 2 0 0 0 2 2h4M10 9H8M16 13H8M16 17H8"/></svg>
          <svg viewBox="0 0 24 24"><path d="M12.830 2.180a2 2 0 0 0-1.660 0L2.600 6.080a1 1 0 0 0 0 1.830l8.580 3.910a2 2 0 0 0 1.660 0l8.580-3.900a1 1 0 0 0 0-1.830zM22 12.200l-9.170 4.200a2 2 0 0 1-1.660 0L2 12.200M22 17.200l-9.170 4.200a2 2 0 0 1-1.660 0L2 17.200"/></svg>
        </aside>
        <div class="app">
          <div class="app-head">
            <span class="back"><svg width="22" height="20" viewBox="0 0 22 20"><path d="M21 10H2M10 1L2 10l8 9"/></svg>Back to Training Zone</span>
            <i></i>
            <b>WOD1</b>
            <span class="prev"><svg width="30" height="30" viewBox="0 0 24 24"><path d="M2.060 12.350a1 1 0 0 1 0-.700 10.750 10.750 0 0 1 19.880 0 1 1 0 0 1 0 .700 10.750 10.750 0 0 1-19.880 0z"/><circle cx="12" cy="12" r="3"/></svg>Preview</span>
            <span class="select">Save to WODs<svg width="18" height="12" viewBox="0 0 18 12"><path d="M1 2l8 8 8-8"/></svg></span>
            <span class="save"><svg width="32" height="30"><use href="#dumbbell" stroke-width="2"/></svg><svg width="28" height="28" viewBox="0 0 24 24"><path d="M15.200 3a2 2 0 0 1 1.400.600l3.800 3.800a2 2 0 0 1 .600 1.400V19a2 2 0 0 1-2 2H5a2 2 0 0 1-2-2V5a2 2 0 0 1 2-2zM17 21v-7a1 1 0 0 0-1-1H8a1 1 0 0 0-1 1v7M7 3v4a1 1 0 0 0 1 1h7"/></svg>Save WOD</span>
          </div>
          <div class="canvas">
            <div class="card c1"><div></div></div>
            <div class="card c2"></div>
            <div class="card c3"></div>
            <div class="card c4"><div><svg width="66" height="66" viewBox="0 0 66 66"><g fill="#17191b"><circle cx="17" cy="15" r="14"/><circle cx="42" cy="15" r="14"/><path d="M4 28h40v34H12c-6-4-8-18-8-34zM44 40h8l12-8v32H52l-8-8z"/></g><circle cx="15" cy="14" r="4" fill="#5f6265"/><circle cx="42" cy="14" r="4" fill="#5f6265"/><path d="M6 20l32 16" stroke="#2b2e31" stroke-width="9"/><rect x="16" y="46" width="18" height="10" fill="none" stroke="#3c4044" stroke-width="1.500"/></svg></div></div>
          </div>
        </div>

        <div class="modal">
          <div class="m-head">
            <div class="m-icon"><svg width="38" height="38"><use href="#dumbbell" stroke-width="2"/></svg></div>
            <div class="m-title"><h1>Preview: WOD1</h1><p>WODS • published • 13 blocks</p></div>
            <svg class="m-x" width="26" height="26"><use href="#x"/></svg>
          </div>
          <div class="m-body">
            <div class="sheet">
              <p class="txt">Enter your text here...</p>
              <div class="block green">
                <span class="badge"><svg width="16" height="16" viewBox="0 0 16 16"><path d="M2 9l4 5 8-12"/></svg>&lt;div&gt;</span>
                <svg width="56" height="60" viewBox="0 0 56 60"><path d="M2 34l34-6 18 14v8L14 59 6 52z" fill="#3d55a8"/><path d="M14 50l39-8v6l-39 9z" fill="#e8e6ea"/><path d="M4 24l40-8 8 17-38 13z" fill="#c93a2c"/><path d="M13 41l38-10v7L14 47z" fill="#f0ecec"/><path d="M13 46l38-9v3l-38 10z" fill="#b53023"/><path d="M3 14L30 2l24 14-33 14z" fill="#6fb455"/><path d="M3 14l18 16v6C10 32 2 22 3 14z" fill="#4e8f3c"/><path d="M21 30l32-13v6L22 36z" fill="#f3f1ee"/><path d="M21 35l32-12v2L21 38z" fill="#3d7d2f"/></svg>
                <b>NEW TEST DOCUMENT 1</b>
                <span class="sub right">n ciao bona sera.</span>
                <div class="popup"><p>Lets fix how blocks are deployed and show<br>n to users, Now,<i></i></p><span><svg width="18" height="20" viewBox="0 0 18 20"><path d="M9 19V2M2 9l7-7 7 7"/></svg></span></div>
              </div>
              <div class="block blue">
                <svg width="60" height="62" viewBox="0 0 60 62"><defs><linearGradient id="rb" x2="0" y2="1"><stop offset="0" stop-color="#d9f3ef"/><stop offset=".35" stop-color="#a9cccd"/><stop offset=".7" stop-color="#4e8796"/><stop offset="1" stop-color="#2f6b7e"/></linearGradient></defs><rect x="1" y="28" width="6" height="17" rx="2" fill="#c9443a"/><rect x="53" y="28" width="6" height="17" rx="2" fill="#c9443a"/><circle cx="30" cy="6" r="5.500" fill="#f7b731"/><path d="M23 11c2-2 12-2 14 0l-3 5h-8z" fill="#5b4a8a"/><rect x="5" y="13" width="50" height="47" rx="9" fill="url(#rb)" stroke="#2b5f70" stroke-width="1.500"/><circle cx="17.500" cy="31" r="6" fill="#fff" stroke="#45a5c9" stroke-width="3"/><circle cx="42.500" cy="31" r="6" fill="#fff" stroke="#45a5c9" stroke-width="3"/><path d="M30 32l4.500 9h-9z" fill="#d4503f"/><rect x="18" y="45" width="24" height="6.500" rx="3" fill="#222"/><path d="M20 48.500h20" stroke="#e9f1f1" stroke-width="4" stroke-dasharray="4.500 .8"/></svg>
                <b>AI Agent Block</b>
                <span class="sub">AA</span>
              </div>
              <div class="unknown">
                <svg width="66" height="66" viewBox="0 0 66 66"><defs><linearGradient id="wr" x2="1"><stop offset="0" stop-color="#8d99a3"/><stop offset="1" stop-color="#75696a"/></linearGradient></defs><path d="M12 2c10-1 16 6 14 15l1 6 36 31c5 6-2 14-9 8L22 28c-10 3-20-3-20-15l10 7 7-2 1-6z" fill="url(#wr)" stroke="#5d6168" stroke-width="1.200"/><path d="M25 24l32 31" stroke="#b9c3ca" stroke-width="2.500"/><circle cx="58" cy="59" r="3.500" fill="#fff" stroke="#555" stroke-width="1"/></svg>
                <span>Unknown block type: prompt</span>
              </div>
              <p class="txt two">Enter your text here...</p>
              <div class="block orange">
                <svg width="46" height="66" viewBox="0 0 46 66"><path d="M35 2L2 34h17L5 63l39-35H24z" fill="#fce074" stroke="#f0a034" stroke-width="2.600" stroke-linejoin="round"/></svg>
                <b>Auto Test</b>
              </div>
            </div>
          </div>
          <div class="m-foot"><span>Preview mode • Changes are not saved automatically</span><button>Close Preview</button></div>
        </div>
        <div class="toast"><svg width="45" height="37"><use href="#wave" stroke="#fff" stroke-width="2.200"/></svg><span>Created by MiniMax Agent</span><svg class="cx" width="16" height="16"><use href="#x"/></svg></div>
      </div>
    </section>
  </div>
</main>
<footer class="desktop"></footer>
</body>
</html>
```
FILE: styles.css
```css
* { box-sizing: border-box; }
body { margin: 0; width: 3600px; height: 2338px; overflow: hidden; position: relative; font-family: Inter, "Liberation Sans", sans-serif; color: #222426; background: #15171b; display: flex; flex-direction: column; }
svg { display: block; flex: none; fill: none; }
h1, h2, h3, p, ul { margin: 0; padding: 0; font-weight: 400; }
.defs { position: absolute; width: 0; height: 0; }

/* macOS menu bar */
.menubar { flex: none; height: 86px; background: linear-gradient(90deg, #ebecea 0, #ebecea 45%, #e2e5e5 70%, #d6dae0 100%); display: grid; align-items: center; padding: 0 0 1px 39px; font-size: 25.500px; color: #0c0c0c; white-space: nowrap;
  grid-template-columns: 68px 143px 84px 88px 99px 129px 176px 132px 85px 137px 1047px 83px 87px 70px 74px 84px 91px 67px 74px 69px 64px 57px 90px 74px 66px 64px 156px 100px; }
.menubar b { font-weight: 700; font-size: 26px; }
.menubar .apple { width: 32px; height: 31px; fill: #000; margin-top: -4px; }
.menubar > svg { fill: #222; }
.menubar > svg[fill="none"] { fill: none; }
.menubar .pct { font-size: 21.500px; }

/* browser window */
.window { flex: none; height: 2236px; margin-top: 2px; background: #fff; border-radius: 22px 22px 24px 24px; overflow: hidden; display: flex; flex-direction: column; position: relative; z-index: 1; }
.tabstrip { height: 80px; flex: none; background: #dfe5da; display: grid; grid-template-columns: 199px 477px 476px 460px 464px 505px 941px 1fr; position: relative; }
.lights { display: flex; gap: 16px; padding: 29px 0 0 42px; }
.lights i { width: 24px; height: 24px; border-radius: 50%; background: #ed6a5e; border: 1px solid #d8574c; }
.lights i:nth-child(2) { background: #f5bf4f; border-color: #dca63a; }
.lights i:nth-child(3) { background: #61c554; border-color: #4fae43; }
.tab { display: grid; grid-template-columns: 32px 17px 331px 16px 40px 16px 4px; align-items: center; height: 80px; font-size: 23.800px; color: #454a43; }
.tab > svg:first-child { width: 32px; height: 32px; grid-column: 1; }
.tab .t { grid-column: 3; white-space: nowrap; overflow: hidden; -webkit-mask-image: linear-gradient(90deg, #000 91%, transparent 100%); mask-image: linear-gradient(90deg, #000 91%, transparent 100%); }
.tab .t em { display: inline-block; width: 1.500px; height: 24px; background: #454a43; margin: 0 19px 0 18px; vertical-align: -4px; }
.tx { grid-column: 5; width: 18px; height: 18px; justify-self: center; stroke: #3d423c; stroke-width: 3.200; }
.tab .sep { grid-column: 7; }
.sep { width: 4px; height: 32px; background: #c4cfba; border-radius: 2px; display: block; }
.tab.active { background: #faf9f7; height: 68px; margin-top: 12px; padding: 0 0 12px 16px; border-radius: 22px 22px 0 0; color: #1f211f; position: relative; }
.tab.active::before, .tab.active::after { content: ""; position: absolute; bottom: 0; width: 24px; height: 24px; left: -24px; background: radial-gradient(circle at 0 0, transparent 23.500px, #faf9f7 24px); }
.tab.active::after { left: auto; right: -24px; background: radial-gradient(circle at 100% 0, transparent 23.500px, #faf9f7 24px); }
.tab.last { padding-left: 28px; }
.newtab { width: 22px; height: 22px; stroke: #3d423c; stroke-width: 2.600; align-self: center; }
.tabmenu { width: 56px; height: 56px; border-radius: 18px; background: #e9f4e4; margin: 12px 12px 0 auto; display: grid; place-items: center; }
.tabmenu svg { stroke: #1f211f; stroke-width: 3; }
.toolbar { height: 92px; flex: none; background: #faf9f7; border-radius: 20px 20px 0 0; box-shadow: 0 -24px 0 -1px #dfe5da; display: grid; align-items: center; padding-left: 32px; grid-template-columns: 72px 72px 64px 2950px 73px 67px 22px 199px 8px; }
.toolbar svg { stroke: #43474a; stroke-width: 2.800; }
.toolbar .dim { stroke: #a9aaa7; }
.omnibox { height: 68px; border-radius: 34px; background: #eaebe6; display: grid; align-items: center; width: 2914px; grid-template-columns: 64px 2582px 66px 66px 62px 40px; padding-left: 10px; }
.site { width: 48px; height: 48px; border-radius: 50%; background: #faf9f7; display: grid; place-items: center; }
.url { font-size: 28.100px; color: #1c1e1c; }
.url span { color: #4c504c; }
.toolbar .ext { stroke: none; stroke-width: 1; }
.toolbar .sep { background: #d6e0cf; }
.profile { height: 68px; width: 160px; border-radius: 34px; background: #dde6d6; display: flex; align-items: center; gap: 12px; padding-left: 20px; font-size: 26px; font-weight: 500; color: #1c1e1c; }
.toolbar .dots { fill: #43474a; stroke: none; }
.bookmarks { height: 70px; flex: none; background: #faf9f7; border-bottom: 2px solid #e2e2df; display: grid; padding: 0 0 12px 24px; align-items: center; font-size: 23.700px; color: #43474a; white-space: nowrap;
  grid-template-columns: 60px 36px 97px 96px 65px 112px 63px 65px 64px 108px 64px 98px 64px 107px 65px 64px 64px 94px 64px 122px 114px 140px 138px 113px 156px 122px 108px 92px 174px 172px 148px 438px 32px; }
.bookmarks a { display: flex; align-items: center; gap: 11px; }
.bookmarks .dir { gap: 16px; }
.bookmarks svg { width: 32px; height: 32px; fill: #111; }
.bookmarks svg[fill="none"] { fill: none; }

.page { flex: 1; display: flex; background: #fff; }

/* chat column */
.chat { width: 1120px; display: flex; flex-direction: column; padding: 25px 28px 36px 29px; }
.chat-tabs { height: 58px; flex: none; display: flex; align-items: center; font-size: 26.900px; color: #7d7f84; white-space: nowrap; }
.side { margin: 0 30px 0 6px; stroke: #3c3d40; stroke-width: 2.400; }
.ct { width: 252px; height: 58px; line-height: 58px; padding-left: 14px; border-radius: 14px; margin-right: 7px; overflow: hidden; flex: none; }
.ct.on { background: #f6f7f9; color: #222426; font-weight: 500; }
.ct.fade { width: 214px; margin-right: 18px; -webkit-mask-image: linear-gradient(90deg, #000 78%, transparent 104%); mask-image: linear-gradient(90deg, #000 78%, transparent 104%); }
.hist, .share { border: 1.500px solid #e9ebed; border-radius: 15px; height: 58px; width: 58px; display: grid; place-items: center; flex: none; }
.hist svg, .share svg { stroke: #47484b; stroke-width: 2.400; }
.share { width: 168px; height: 56px; margin-left: 15px; display: flex; justify-content: center; gap: 9px; align-items: center; font-size: 24.600px; font-weight: 500; color: #47484b; }
.msg { height: 1559px; flex: none; position: relative; padding-top: 20px; font-size: 28.550px; line-height: 49px; white-space: nowrap; }
.cont { padding-left: 25px; margin-bottom: 12px; }
.msg ul { list-style: none; padding-left: 25px; }
.msg li { margin-bottom: 10.600px; }
.msg li:last-child { margin-bottom: 0; }
.msg li::before { content: ""; display: inline-block; width: 9px; height: 9px; border-radius: 50%; background: #a9aaad; margin-right: 29px; vertical-align: 4px; }
.msg h3 { font-size: 33.700px; font-weight: 600; line-height: 50px; margin: 23px 0 22px -1px; }
.link { color: #3f83f6; text-decoration: underline; text-decoration-thickness: 2px; text-underline-offset: 5px; margin-left: 4px; }
.msg code { display: inline-block; font: 25.200px/32px "DejaVu Sans Mono", monospace; color: #52689b; background: #f7f8fa; border-radius: 7px; padding: 0 14px; margin: 0 8px; }
.arr { display: inline-block; stroke: #222426; stroke-width: 2.400; margin: 0 9px 0 10px; vertical-align: 0; }
.done { width: 773px; height: 53px; line-height: 53px; margin-top: 28px; border-radius: 27px; background: #f1f9ef; color: #4aad40; font-size: 23.400px; padding-left: 22px; display: flex; align-items: center; gap: 12px; }
.done svg, .all svg { stroke: currentColor; stroke-width: 2.600; }
.files { display: grid; grid-template-columns: repeat(3, 340px); grid-template-rows: 103px 100px; gap: 15px 14px; margin-top: 28px; }
.file { background: #f6f7f9; border: 1.500px solid #e9ebed; border-radius: 22px; display: flex; align-items: center; gap: 19px; padding-left: 26px; font-size: 23.300px; }
.file.all { gap: 17px; padding-left: 66px; }
.file.all svg:last-child { margin-left: -9px; }
.supa { width: 424px; height: 59px; line-height: 56px; margin-top: 35px; border: 1.500px solid #e6e8ea; border-radius: 15px; font-size: 23.400px; display: flex; align-items: center; gap: 11px; padding-left: 29px; }
.down { position: absolute; left: 497px; top: 1447px; width: 65px; height: 65px; border-radius: 50%; border: 1.500px solid #eceef0; background: #fff; display: grid; place-items: center; }
.down svg { stroke: #1d1e20; stroke-width: 2.800; }
.composer { height: 316px; flex: none; border: 2px solid transparent; border-radius: 34px; background: linear-gradient(#fff, #fff) padding-box, linear-gradient(90deg, #92c0f6, #9a90ee) border-box; padding: 20px 20px 20px; display: flex; flex-direction: column; }
.chip { width: 160px; height: 56px; border: 1.500px solid #e6e8eb; border-radius: 14px; background: #f6f7f9; display: flex; align-items: center; padding-left: 17px; gap: 16px; font-size: 25.500px; color: #47484b; }
.chip svg { stroke: #47484b; stroke-width: 2.200; }
.chip .cx { stroke: #a0a3a8; stroke-width: 2.800; margin-left: 13px; }
.ph { font-size: 24.600px; color: #c2c5cc; line-height: 50px; margin: 22px 0 0 8px; flex: 1; }
.actions { display: flex; height: 60px; align-items: center; }
.sq { width: 60px; height: 60px; border: 1.500px solid #e9ebed; border-radius: 16px; display: grid; place-items: center; stroke: #3d3e40; stroke-width: 2; margin-right: 14px; }
.mcp { width: 125px; stroke: none; font-size: 25.500px; color: #96989c; border-color: #f1f2f4; }
.sel { stroke: #5ca5fb; background: #f3f8fe; border-color: #e2edfb; stroke-width: 2.600; }
.sel path:first-child { stroke-dasharray: 4 2.500; }
.pro { margin-left: auto; display: flex; align-items: center; gap: 9px; font-size: 25px; color: #111; margin-right: 33px; }
.pro svg { stroke: #111; stroke-width: 2.400; }
.send { width: 58px; height: 58px; border-radius: 18px; background: #d3d3d4; display: grid; place-items: center; stroke: #fff; stroke-width: 2.400; }

/* agent window panel */
.panel { width: 2452px; height: 1935px; margin-top: 23px; background: #f6f7f9; border: 1.500px solid #e7e9ec; border-radius: 38px; padding: 28px 28.500px; }
.panel-head { height: 48px; display: flex; justify-content: space-between; align-items: center; padding-right: 11px; }
.panel-head h2 { font-size: 31.800px; font-weight: 500; }
.panel-head svg { stroke: #a3a4a8; stroke-width: 2.400; margin-top: 4px; }
.panel-tabs { display: flex; align-items: center; height: 60px; margin: 20px 0 17px; font-size: 25px; }
.pill { width: 239px; height: 60px; border-radius: 30px; background: #fff; display: grid; place-items: center; font-weight: 500; padding-bottom: 2px; }
.panel-tabs i { width: 2px; height: 28px; background: #dcdee1; margin: 0 35px 0 14px; }
.off { color: #7d8085; padding-bottom: 2px; }
.view { position: relative; width: 2391px; height: 1731px; border-radius: 24px; overflow: hidden; display: flex; background: #808080; }
.rail { width: 115px; background: #080b14; display: flex; flex-direction: column; align-items: center; gap: 74px; padding: 51px 0 0 2px; }
.rail svg { width: 34px; height: 34px; stroke: #4d5057; stroke-width: 1.700; stroke-linejoin: round; }
.app { flex: 1; display: flex; flex-direction: column; }
.app-head { height: 145px; flex: none; border-bottom: 2px solid #747475; display: flex; align-items: flex-start; padding-left: 46px; font-size: 24.300px; font-weight: 500; color: #23272f; white-space: nowrap; }
.app-head svg { stroke: currentColor; stroke-width: 2; }
.app-head > i { width: 1.500px; height: 58px; background: #6c6d70; margin: 29px 0 0 29px; }
.app-head > b { font-size: 31px; font-weight: 600; color: #0a0d16; width: 1042px; margin: 36px 0 0 30px; line-height: 38px; }
.back, .prev { display: flex; align-items: center; height: 64px; margin-top: 40px; width: 298px; gap: 18px; }
.back { font-size: 24.800px; }
.prev { width: 179px; gap: 13px; }
.select { width: 320px; height: 61px; margin: 41px 21px 0 -1px; border: 1.500px solid #6a6b6e; border-radius: 14px; display: flex; align-items: center; padding: 0 6px 0 29px; justify-content: space-between; color: #000; font-size: 24.900px; }
.select svg { stroke-width: 2.600; }
.save { width: 268px; height: 64px; margin-top: 40px; border-radius: 14px; background: #6c2f14; color: #a39792; display: flex; align-items: center; padding-left: 28px; gap: 14px; }
.canvas { flex: 1; padding: 59px 0 0 333px; overflow: hidden; }
.card { width: 1611px; border: 3px solid #757576; border-radius: 14px; margin-bottom: 44px; padding: 42px; }
.c1 { height: 617px; }
.c1 div { height: 522px; background: #7a7b7d; border-radius: 14px; }
.c2 { height: 221px; }
.c3 { height: 386px; margin-bottom: 45px; }
.c4 { height: 400px; }
.c4 div { height: 300px; background: #77787b; border-radius: 14px; padding: 59px 0 0 728px; }

.modal { position: absolute; left: 389px; top: 87px; width: 1613px; height: 1557px; border-radius: 26px 26px 0 0; background: #fff; overflow: hidden; display: flex; flex-direction: column; }
.view::after { content: ""; position: absolute; left: 389px; top: 87px; width: 1613px; height: 1557px; border-radius: 26px 26px 0 0; box-shadow: 0 36px 70px -18px rgba(0,0,0,.3); pointer-events: none; }
.m-head { height: 174px; flex: none; border-bottom: 2px solid #e5e7ea; display: flex; align-items: center; padding: 0 63px 0 43px; }
.m-icon { width: 72px; height: 72px; border-radius: 14px; background: #d9622b; display: grid; place-items: center; stroke: #fff; }
.m-title { flex: 1; margin-left: 22px; }
.m-title h1 { font-size: 34.200px; font-weight: 600; color: #121826; line-height: 42px; margin-top: 4px; }
.m-title p { font-size: 24.400px; color: #525a67; line-height: 42px; }
.m-x { stroke: #a0a5b0; stroke-width: 2.400; }
.m-body { height: 1224px; flex: none; background: #f8fafc; overflow: hidden; padding: 0 113px 0 115px; }
.sheet { background: #fff; border: 1.500px solid #f2f4f7; border-top: 0; border-bottom: 0; height: 1300px; padding: 33px 57px 0; display: flex; flex-direction: column; }
.txt { font-size: 27.500px; line-height: 48px; color: #000; height: 48px; flex: none; }
.block { display: flex; flex-direction: column; align-items: center; border-radius: 14px; flex: none; }
.block b { font-weight: 500; font-size: 27.850px; color: #000; line-height: 40px; }
.sub { font-size: 24.800px; color: #4e5663; line-height: 36px; }
.green { position: relative; width: 1276px; height: 295px; margin: 36px 0 40px -4px; border: 4px solid #3478f6; border-radius: 4px; background: #f3fdf5; padding-top: 61px; box-shadow: 0 0 16px 3px rgba(245,110,60,.25); }
.green > svg { margin-bottom: 24px; }
.green .sub { margin-top: 9px; }
.sub.right { width: 441px; text-align: right; }
.badge { position: absolute; left: 0; top: -51px; width: 108px; height: 40px; border-radius: 6px; background: #3478f6; color: #fff; font-size: 20px; font-weight: 700; display: flex; align-items: center; justify-content: center; gap: 6px; box-shadow: 0 4px 10px rgba(0,0,0,.25); }
.badge svg { stroke: #fff; stroke-width: 3; }
.popup { position: absolute; left: 39px; top: 194px; width: 627px; height: 130px; border-radius: 22px; background: #fff; box-shadow: 0 6px 24px rgba(0,0,0,.15); padding: 23px 22px 0 29px; display: flex; justify-content: space-between; font-size: 25.250px; line-height: 40px; color: #222426; white-space: nowrap; }
.popup i { display: inline-block; width: 2px; height: 29px; background: #4a9de8; vertical-align: -6px; margin-left: 6px; }
.popup span { width: 43px; height: 43px; border-radius: 11px; background: #212121; display: grid; place-items: center; stroke: #fff; stroke-width: 2.600; margin-top: 20px; }
.blue { height: 288px; background: #f1f5fe; padding-top: 60px; }
.blue > svg { margin-bottom: 24px; }
.blue .sub { margin-top: 7px; }
.unknown { display: flex; flex-direction: column; align-items: center; color: #9ca3af; font-size: 27.500px; line-height: 40px; padding-top: 45px; }
.unknown svg { margin-bottom: 20px; }
.two { margin: 43px 0 41px; }
.orange { height: 300px; background: #fff6ec; padding-top: 60px; }
.orange svg { margin-bottom: 20px; }
.m-foot { flex: 1; background: #f8fafc; border-top: 2px solid #e1e5e9; display: flex; justify-content: space-between; align-items: center; padding: 0 43px 1px 44px; font-size: 24.350px; color: #4e5563; position: relative; }
.m-foot button { width: 242px; height: 72px; border: 0; border-radius: 14px; background: #d9622b; color: #fff; font: 500 27.200px Inter, sans-serif; padding: 0; }
.toast { position: absolute; z-index: 2; left: 1930px; top: 1619px; width: 425px; height: 76px; border-radius: 21px; background: #212121; color: #fff; display: flex; align-items: center; padding-left: 25px; font-size: 21.700px; font-weight: 500; white-space: nowrap; }
.toast span { width: 309px; padding-left: 14px; }
.toast .cx { stroke: #b5b5b5; stroke-width: 3; margin-top: 4px; }

/* windows peeking out below the browser */
.desktop { position: absolute; left: 0; right: 0; bottom: 0; height: 60px; border-radius: 0 0 26px 26px; background: linear-gradient(90deg, transparent 1014px, #8d8d8d 1014px, #8d8d8d 1016px, transparent 1016px), radial-gradient(ellipse 40px 40px at 345px 60px, #848484, transparent), linear-gradient(#808080 44px, #9c9c9c 47px, #b8b8b8 60px); }
```
